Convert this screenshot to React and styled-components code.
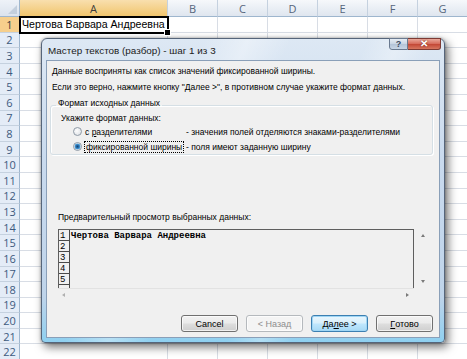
import React from 'react';
import styled, { createGlobalStyle, css } from 'styled-components';

const GlobalStyle = createGlobalStyle`
  html, body { margin: 0; padding: 0; }
  body {
    width: 467px;
    height: 359px;
    overflow: hidden;
    background: #fff;
    font-family: "Liberation Sans", Arial, sans-serif;
  }
`;

const COLS = ['A', 'B', 'C', 'D', 'E', 'F', 'G'];
const ROW_COUNT = 22;

const Screen = styled.div`
  position: relative;
  width: 467px;
  height: 359px;
  overflow: hidden;
`;

/* ---------- spreadsheet ---------- */

const Sheet = styled.div`
  display: grid;
  grid-template-columns: 20px 148px repeat(6, 50px);
  grid-template-rows: 17px;
  grid-auto-rows: 15.6px;
  font-family: "Open Sans", "Liberation Sans", sans-serif;
`;

const Corner = styled.div`
  position: relative;
  box-sizing: border-box;
  background: linear-gradient(#eef2f8, #dbe3ee);
  border-right: 1px solid #9eb6ce;
  border-bottom: 1px solid #9eb6ce;

  &::after {
    content: "";
    position: absolute;
    right: 2px;
    bottom: 2px;
    border-left: 9px solid transparent;
    border-bottom: 9px solid #c3cfdd;
  }
`;

const ColHead = styled.div`
  box-sizing: border-box;
  display: flex;
  align-items: center;
  justify-content: center;
  font-size: 11px;
  color: ${p => (p.$sel ? '#3b3b3b' : '#56667c')};
  background: ${p => (p.$sel ? 'linear-gradient(#f9dfae, #f1c56d)' : 'linear-gradient(#f6f8fb, #dfe6ef)')};
  border-right: 1px solid #c5d1df;
  border-bottom: 1px solid ${p => (p.$sel ? '#d9a13e' : '#9eb6ce')};
`;

const RowHead = styled.div`
  box-sizing: border-box;
  display: flex;
  align-items: center;
  justify-content: center;
  font-size: 11px;
  color: ${p => (p.$sel ? '#3b3b3b' : '#3d5a7e')};
  background: ${p => (p.$sel ? '#f6cf8c' : '#e4ecf7')};
  border-right: 1px solid ${p => (p.$sel ? '#d9a13e' : '#9eb6ce')};
  border-bottom: 1px solid #c5d1df;
`;

const Cell = styled.div`
  position: relative;
  box-sizing: border-box;
  border-right: 1px solid #d8dde5;
  border-bottom: 1px solid #d8dde5;
  font-family: "Liberation Sans", Arial, sans-serif;
  font-size: 10.6px;
  line-height: 14px;
  padding-left: 2px;
  color: #000;
  white-space: nowrap;

  ${p => p.$active && css`
    z-index: 1;
    outline: 2px solid #000;
    outline-offset: -1px;

    &::after {
      content: "";
      position: absolute;
      right: -4px;
      bottom: -4px;
      width: 5px;
      height: 5px;
      background: #000;
      border: 1px solid #fff;
    }
  `}
`;

/* ---------- dialog ---------- */

const Dialog = styled.div`
  position: absolute;
  left: 41px;
  top: 38px;
  width: 404px;
  height: 305px;
  box-sizing: border-box;
  display: flex;
  flex-direction: column;
  border: 1px solid #56657a;
  border-radius: 6px 6px 4px 4px;
  background:
    linear-gradient(115deg, transparent 30%, rgba(255, 255, 255, 0.35) 38%, transparent 46%, transparent 60%, rgba(255, 255, 255, 0.3) 66%, transparent 72%),
    linear-gradient(#dde8f4 0%, #c9daee 40%, #bfd4ea 85%, #8fd0f0 100%);
  box-shadow: 3px 4px 10px rgba(0, 0, 0, 0.55), 0 0 3px rgba(0, 0, 0, 0.35);
  font-family: "Liberation Sans", Arial, sans-serif;
`;

const TitleBar = styled.div`
  height: 21px;
  display: flex;
  align-items: flex-start;
  flex-shrink: 0;
`;

const Title = styled.div`
  flex: 1;
  padding: 6px 0 0 6px;
  font-size: 9.9px;
  line-height: 12px;
  color: #1a1a1a;
  white-space: nowrap;
`;

const Captions = styled.div`
  display: flex;
  margin: -1px 3px 0 0;
`;

const CaptionButton = styled.div`
  width: ${p => (p.$close ? 33 : 19)}px;
  height: 12px;
  box-sizing: border-box;
  display: flex;
  align-items: center;
  justify-content: center;
  font-size: ${p => (p.$close ? 10 : 9)}px;
  font-weight: bold;
  line-height: 1;
  color: ${p => (p.$close ? '#fff' : '#3a4a5e')};
  border: 1px solid ${p => (p.$close ? '#7d3a33' : '#6a7a90')};
  border-left-width: ${p => (p.$close ? 0 : 1)}px;
  border-radius: ${p => (p.$close ? '0 0 3px 0' : '0 0 0 3px')};
  background: ${p => (p.$close
    ? 'linear-gradient(#e9a99b 0%, #d86f5f 45%, #c44a38 55%, #d7765f 100%)'
    : 'linear-gradient(#e6edf5 0%, #cbd7e5 45%, #b5c5d9 55%, #c8d6e6 100%)')};
  text-shadow: ${p => (p.$close ? '0 0 2px #6a2017' : 'none')};
`;

const Client = styled.div`
  flex: 1;
  margin: 0 4px 4px;
  box-sizing: border-box;
  display: flex;
  flex-direction: column;
  padding: 2px 6px 5px 3px;
  border: 1px solid #8a9fb8;
  background: #f0f0f0;
  font-size: 8.5px;
  color: #000;
`;

const Text = styled.div`
  padding-left: 2px;
  line-height: 16px;
  white-space: nowrap;
`;

const Group = styled.fieldset`
  margin: 2px 0 0;
  padding: 0 0 0 9px;
  min-width: 0;
  border: 1px solid #d5dfe5;
  border-radius: 3px;
  box-shadow: inset 1px 1px 0 #fff, 1px 1px 0 #fff;
`;

const Legend = styled.legend`
  margin-left: -4px;
  padding: 0 2px 4px;
  line-height: 12px;
`;

const Prompt = styled.div`
  margin-top: -1px;
  padding-left: 1px;
  line-height: 12px;
`;

const OptionRow = styled.div`
  display: grid;
  grid-template-columns: 111px 1fr;
  align-items: center;
  height: 15px;
  padding-left: 13px;
  white-space: nowrap;
`;

const RadioLabel = styled.div`
  display: flex;
  align-items: center;
  gap: 3px;
`;

const Radio = styled.span`
  flex-shrink: 0;
  width: 9px;
  height: 9px;
  box-sizing: border-box;
  border-radius: 50%;
  border: 1px solid #8f9aa6;
  background: ${p => (p.$checked
    ? 'radial-gradient(circle, #17456f 0, #2772b3 1.6px, #62ade2 2.8px, #e8eef4 3.2px)'
    : 'radial-gradient(circle at 40% 40%, #fdfdfd, #d9dde2)')};
`;

const Focus = styled.span`
  padding: 0 1px;
  outline: 1px dotted #000;
  outline-offset: 0;
  line-height: 10px;
`;

const Accel = styled.span`
  text-decoration: underline;
`;

const Description = styled.div`
  padding-left: 2px;
`;

const PreviewLabel = styled.div`
  margin-top: 56px;
  padding-left: 8px;
  line-height: 12px;
`;

const Preview = styled.div`
  margin: 6px 1px 0 8px;
  height: 71px;
  display: grid;
  grid-template-columns: 1fr 18px;
  grid-template-rows: 1fr 12px;
`;

const DataArea = styled.div`
  display: flex;
  border: 1px solid #5e5e5e;
  border-bottom: none;
  font-family: "Liberation Mono", "Courier New", monospace;
  font-size: 9px;
`;

const RowNumbers = styled.div`
  width: 10px;
  border-right: 1px solid #4a4a4a;
`;

const RowNumber = styled.div`
  height: 10px;
  line-height: 12px;
  padding-left: 1px;
  border-bottom: 1px solid #4a4a4a;
`;

const DataLine = styled.div`
  padding-left: 1px;
  line-height: 13px;
  font-weight: bold;
  white-space: nowrap;
`;

const VScroll = styled.div`
  display: flex;
  flex-direction: column;
  align-items: center;
  justify-content: space-between;
  padding: 5px 0 5px;
`;

const HScroll = styled.div`
  display: flex;
  align-items: center;
  justify-content: space-between;
  padding: 0 5px 0 4px;
  border-top: 1px solid #e2e2e2;
`;

const Arrow = styled.span`
  width: 0;
  height: 0;
  ${p => p.$dir === 'up' && css`
    border-left: 2.5px solid transparent;
    border-right: 2.5px solid transparent;
    border-bottom: 3px solid #7a7a7a;
  `}
  ${p => p.$dir === 'down' && css`
    border-left: 2.5px solid transparent;
    border-right: 2.5px solid transparent;
    border-top: 3px solid #7a7a7a;
  `}
  ${p => p.$dir === 'left' && css`
    border-top: 2.5px solid transparent;
    border-bottom: 2.5px solid transparent;
    border-right: 3px solid #b0b0b0;
  `}
  ${p => p.$dir === 'right' && css`
    border-top: 2.5px solid transparent;
    border-bottom: 2.5px solid transparent;
    border-left: 3px solid #7a7a7a;
  `}
`;

const Buttons = styled.div`
  margin-top: auto;
  display: flex;
  justify-content: flex-end;
  gap: 8px;
`;

const Button = styled.div`
  width: 57px;
  height: 17px;
  box-sizing: border-box;
  display: flex;
  align-items: center;
  justify-content: center;
  font-size: 9px;
  border-radius: 3px;
  border: 1px solid ${p => (p.$disabled ? '#b5b9bd' : p.$default ? '#3c7fb1' : '#707070')};
  color: ${p => (p.$disabled ? '#8d8d8d' : '#000')};
  background: ${p => (p.$disabled
    ? '#f4f4f4'
    : p.$default
      ? 'linear-gradient(#eaf6fd 0%, #d9f0fc 45%, #bee6fd 55%, #a7d9f5 100%)'
      : 'linear-gradient(#f2f2f2 0%, #ebebeb 45%, #dddddd 55%, #cfcfcf 100%)')};
  box-shadow: ${p => (p.$default ? 'inset 0 0 0 1px #9fd6f5' : 'inset 0 0 0 1px rgba(255,255,255,0.7)')};
`;

export default function App() {
  const rows = Array.from({ length: ROW_COUNT }, (_, i) => i + 1);

  return (
    <Screen>
      <GlobalStyle />
      <Sheet>
        <Corner />
        {COLS.map(c => (
          <ColHead key={c} $sel={c === 'A'}>{c}</ColHead>
        ))}
        {rows.map(r => (
          <React.Fragment key={r}>
            <RowHead $sel={r === 1}>{r}</RowHead>
            {COLS.map(c => (
              <Cell key={c} $active={r === 1 && c === 'A'}>
                {r === 1 && c === 'A' ? 'Чертова Варвара Андреевна' : null}
              </Cell>
            ))}
          </React.Fragment>
        ))}
      </Sheet>

      <Dialog>
        <TitleBar>
          <Title>Мастер текстов (разбор) - шаг 1 из 3</Title>
          <Captions>
            <CaptionButton>?</CaptionButton>
            <CaptionButton $close>✕</CaptionButton>
          </Captions>
        </TitleBar>

        <Client>
          <Text>Данные восприняты как список значений фиксированной ширины.</Text>
          <Text>Если это верно, нажмите кнопку "Далее &gt;", в противном случае укажите формат данных.</Text>

          <Group>
            <Legend>Формат исходных данных</Legend>
            <Prompt>Укажите формат данных:</Prompt>
            <OptionRow>
              <RadioLabel>
                <Radio />
                <span>с <Accel>р</Accel>азделителями</span>
              </RadioLabel>
              <Description>- значения полей отделяются знаками-разделителями</Description>
            </OptionRow>
            <OptionRow>
              <RadioLabel>
                <Radio $checked />
                <Focus>фиксированной ширины</Focus>
              </RadioLabel>
              <Description>- поля имеют заданную ширину</Description>
            </OptionRow>
          </Group>

          <PreviewLabel>Предварительный просмотр выбранных данных:</PreviewLabel>
          <Preview>
            <DataArea>
              <RowNumbers>
                {[1, 2, 3, 4, 5].map(n => (
                  <RowNumber key={n}>{n}</RowNumber>
                ))}
              </RowNumbers>
              <DataLine>Чертова Варвара Андреевна</DataLine>
            </DataArea>
            <VScroll>
              <Arrow $dir="up" />
              <Arrow $dir="down" />
            </VScroll>
            <HScroll>
              <Arrow $dir="left" />
              <Arrow $dir="right" />
            </HScroll>
            <div />
          </Preview>

          <Buttons>
            <Button>Cancel</Button>
            <Button $disabled>&lt; Назад</Button>
            <Button $default>Да<Accel>л</Accel>ее &gt;</Button>
            <Button><Accel>Г</Accel>отово</Button>
          </Buttons>
        </Client>
      </Dialog>
    </Screen>
  );
}
